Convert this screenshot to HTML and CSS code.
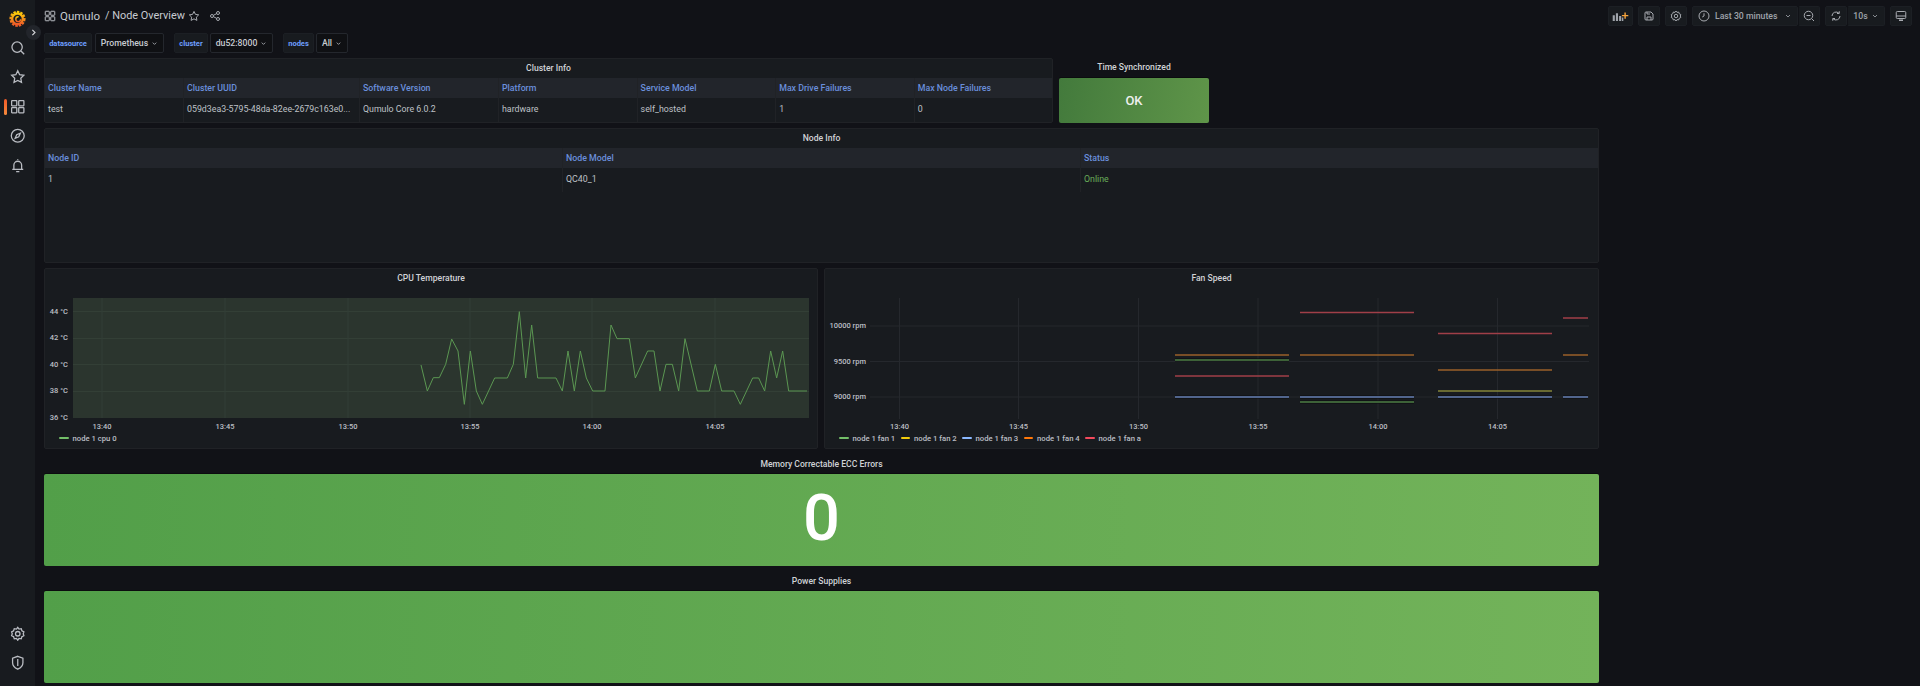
FILE: index.html
```html
<!DOCTYPE html>
<html lang="en">
<head>
<meta charset="utf-8">
<title>Qumulo / Node Overview</title>
<link rel="stylesheet" href="styles.css">
</head>
<body>
<svg class="defs" width="0" height="0">
  <defs>
    <linearGradient id="logoGrad" x1="0" y1="1" x2="0" y2="0"><stop offset="0" stop-color="#f05a28"/><stop offset="1" stop-color="#fbca0a"/></linearGradient>
    <symbol id="i-search" viewBox="0 0 24 24"><circle cx="11" cy="11" r="8"/><path d="M17 17l5 5"/></symbol>
    <symbol id="i-star" viewBox="0 0 24 24"><path d="M12 2.8l2.9 6 6.500.9-4.700 4.600 1.100 6.500-5.800-3.100-5.800 3.100 1.100-6.500-4.700-4.600 6.500-.9z"/></symbol>
    <symbol id="i-grid" viewBox="0 0 24 24"><rect x="2.500" y="2.500" width="8" height="8" rx=".8"/><rect x="13.500" y="2.500" width="8" height="8" rx=".8"/><rect x="2.500" y="13.500" width="8" height="8" rx=".8"/><rect x="13.500" y="13.500" width="8" height="8" rx=".8"/></symbol>
    <symbol id="i-compass" viewBox="0 0 24 24"><circle cx="12" cy="12" r="10"/><path d="M16 8l-2.400 5.600L8 16l2.400-5.600z"/></symbol>
    <symbol id="i-bell" viewBox="0 0 24 24"><path d="M6 17v-6a6 6 0 0 1 12 0v6M3.500 17.500h17M9.500 21h5M12 3V2"/></symbol>
    <symbol id="i-cog" viewBox="0 0 24 24"><circle cx="12" cy="12" r="3.500"/><path d="M12 2l2 2.800 3.400-.7 1 3.300 3.100 1.600-1 3 1 3-3.100 1.600-1 3.300-3.400-.7L12 22l-2-2.800-3.400.7-1-3.300-3.100-1.600 1-3-1-3 3.100-1.600 1-3.300 3.400.7z"/></symbol>
    <symbol id="i-shield" viewBox="0 0 24 24"><path d="M12 2l8 3v7c0 5-3.500 8-8 10-4.500-2-8-5-8-10V5z"/><path d="M12 6v11"/></symbol>
    <symbol id="i-share" viewBox="0 0 24 24"><circle cx="6" cy="12" r="3"/><circle cx="18" cy="6" r="3"/><circle cx="18" cy="18" r="3"/><path d="M8.700 10.700l6.600-3.400M8.700 13.300l6.600 3.400"/></symbol>
    <symbol id="i-save" viewBox="0 0 24 24"><path d="M4 6a2 2 0 0 1 2-2h10l4 4v10a2 2 0 0 1-2 2H6a2 2 0 0 1-2-2z"/><path d="M8 4v4h6M8 20v-6h8v6"/></symbol>
    <symbol id="i-clock" viewBox="0 0 24 24"><circle cx="12" cy="12" r="10"/><path d="M12 6.500V12l-3.500 2"/></symbol>
    <symbol id="i-zoom" viewBox="0 0 24 24"><circle cx="11" cy="11" r="8.500"/><path d="M17.500 17.500l4.500 4.500M7 11h8"/></symbol>
    <symbol id="i-sync" viewBox="0 0 24 24"><path d="M20 12a8 8 0 0 1-14 5.300M4 12a8 8 0 0 1 14-5.300"/><path d="M18.500 2.500v4.500H14M5.500 21.500V17H10"/></symbol>
    <symbol id="i-tv" viewBox="0 0 24 24"><rect x="2.500" y="3" width="19" height="14" rx="2"/><path d="M2.500 12h19M8 21h8M10 17v4M14 17v4"/></symbol>
    <symbol id="i-chev" viewBox="0 0 24 24"><path d="M6 9l6 6 6-6"/></symbol>
  </defs>
</svg>

<div class="app">
  <aside class="sidebar">
    <div class="side-top">
      <svg class="logo" viewBox="0 0 24 24">
        <circle cx="12" cy="12.500" r="9.800" fill="none" stroke="url(#logoGrad)" stroke-width="3.200" stroke-dasharray="3.400 1.600"/>
        <circle cx="12" cy="12.500" r="7.600" fill="none" stroke="url(#logoGrad)" stroke-width="3.400"/>
        <circle cx="13" cy="13" r="3.400" fill="none" stroke="url(#logoGrad)" stroke-width="2" stroke-dasharray="15 7"/>
      </svg>
      <svg class="side-ic"><use href="#i-search"/></svg>
      <svg class="side-ic"><use href="#i-star"/></svg>
      <div class="side-active"><svg class="side-ic"><use href="#i-grid"/></svg></div>
      <svg class="side-ic"><use href="#i-compass"/></svg>
      <svg class="side-ic"><use href="#i-bell"/></svg>
    </div>
    <div class="side-bottom">
      <svg class="side-ic"><use href="#i-cog"/></svg>
      <svg class="side-ic"><use href="#i-shield"/></svg>
    </div>
  </aside>
  <button class="toggle" aria-label="Expand"><svg viewBox="0 0 24 24"><path d="M9 5l7 7-7 7"/></svg></button>

  <main class="main">
    <header class="nav">
      <svg class="nav-grid"><use href="#i-grid"/></svg>
      <span class="crumb">Qumulo</span>
      <span class="crumb crumb-page">/ Node Overview</span>
      <svg class="nav-ic nav-star"><use href="#i-star"/></svg>
      <svg class="nav-ic nav-share"><use href="#i-share"/></svg>
      <div class="toolbar">
        <div class="tbtn tbtn-add">
          <svg class="bars" viewBox="0 0 24 14"><path class="bars-g" d="M1 6h3v8H1zM5.500 3h3v11h-3zM10 7h3v7h-3zM14 9h2v5h-2z"/><path class="bars-p" d="M17.500 2h2v3.500H23v2h-3.500V11h-2V7.500H14v-2h3.500z"/></svg>
        </div>
        <div class="tbtn tbtn-sq"><svg class="nav-ic"><use href="#i-save"/></svg></div>
        <div class="tbtn tbtn-sq"><svg class="nav-ic"><use href="#i-cog"/></svg></div>
        <div class="tgroup">
          <div class="tbtn tbtn-time"><svg class="nav-ic"><use href="#i-clock"/></svg><span>Last 30 minutes</span><svg class="chev"><use href="#i-chev"/></svg></div>
          <div class="tbtn tbtn-sq tbtn-join"><svg class="nav-ic"><use href="#i-zoom"/></svg></div>
        </div>
        <div class="tgroup">
          <div class="tbtn tbtn-sq"><svg class="nav-ic"><use href="#i-sync"/></svg></div>
          <div class="tbtn tbtn-rate tbtn-join"><span>10s</span><svg class="chev"><use href="#i-chev"/></svg></div>
        </div>
        <div class="tbtn tbtn-sq"><svg class="nav-ic"><use href="#i-tv"/></svg></div>
      </div>
    </header>

    <div class="vars">
      <span class="var-label var-ds">datasource</span><span class="var-value var-v1">Prometheus<svg class="chev"><use href="#i-chev"/></svg></span>
      <span class="var-label var-cl">cluster</span><span class="var-value var-v2">du52:8000<svg class="chev"><use href="#i-chev"/></svg></span>
      <span class="var-label var-no">nodes</span><span class="var-value var-v3">All<svg class="chev"><use href="#i-chev"/></svg></span>
    </div>

    <div class="dash">
      <div class="row row-1">
        <section class="panel panel-cluster">
          <h2 class="ptitle">Cluster Info</h2>
          <div class="tbl tbl-cluster">
            <div class="th">Cluster Name</div><div class="th">Cluster UUID</div><div class="th">Software Version</div><div class="th">Platform</div><div class="th">Service Model</div><div class="th">Max Drive Failures</div><div class="th">Max Node Failures</div>
            <div class="td">test</div><div class="td">059d3ea3-5795-48da-82ee-2679c163e0...</div><div class="td">Qumulo Core 6.0.2</div><div class="td">hardware</div><div class="td">self_hosted</div><div class="td">1</div><div class="td">0</div>
          </div>
        </section>
        <section class="stat-time">
          <h2 class="ptitle">Time Synchronized</h2>
          <div class="ok">OK</div>
        </section>
      </div>

      <section class="panel panel-node">
        <h2 class="ptitle">Node Info</h2>
        <div class="tbl tbl-node">
          <div class="th">Node ID</div><div class="th">Node Model</div><div class="th">Status</div>
          <div class="td">1</div><div class="td">QC40_1</div><div class="td td-ok">Online</div>
        </div>
      </section>

      <div class="row row-3">
        <section class="panel panel-graph panel-cpu">
          <h2 class="ptitle">CPU Temperature</h2>
          <svg class="chart" viewBox="45 288 772 142">
            <rect class="plot-bg" x="73" y="298" width="736" height="120"/>
            <path class="grid-g" d="M73 311.500H809M73 338.500H809M73 364.500H809M73 391.500H809M102 298V418M225 298V418M348 298V418M470 298V418M592 298V418M715 298V418"/>
            <g transform="translate(430 280) scale(.33333)">
              <path class="cpu-line" d="M-27 255L-8 333 10 293 28 293 47 253 65 177 84 213 103 373 121 213 139 333 157 373 194 294 232 294 250 253 268 95 287 294 305 135 323 294 378 294 397 333 414 213 433 333 451 213 469 294 488 333 525 333 543 135 561 176 598 176 616 294 653 213 672 213 690 333 708 253 727 253 746 333 765 176 802 333 838 333 856 253 875 333 912 333 931 373 968 294 986 294 1004 333 1022 213 1040 294 1058 213 1076 333 1131 333"/>
            </g>
            <g class="ax ax-y">
              <text x="68" y="313.500">44 °C</text><text x="68" y="340">42 °C</text><text x="68" y="366.500">40 °C</text><text x="68" y="393">38 °C</text><text x="68" y="419.500">36 °C</text>
            </g>
            <g class="ax ax-x">
              <text x="102" y="429">13:40</text><text x="225" y="429">13:45</text><text x="348" y="429">13:50</text><text x="470" y="429">13:55</text><text x="592" y="429">14:00</text><text x="715" y="429">14:05</text>
            </g>
          </svg>
          <div class="legend">
            <span class="lg"><i class="sw sw-green"></i>node 1 cpu 0</span>
          </div>
        </section>
        <section class="panel panel-graph panel-fan">
          <h2 class="ptitle">Fan Speed</h2>
          <svg class="chart" viewBox="825 288 773 142">
            <path class="grid-d" d="M870 326H1589M870 361.500H1589M870 397H1589M899.500 298V419M1018.500 298V419M1138.500 298V419M1258 298V419M1378 298V419M1497.500 298V419"/>
            <path class="halo" d="M1175 397H1289M1300 397H1414M1438 397H1552M1563 397H1588M1300 402H1414M1175 360H1289"/>
            <path class="s-green" d="M1175 360H1289M1300 402H1414"/>
            <path class="s-yellow" d="M1438 391H1552"/>
            <path class="s-blue" d="M1175 397H1289M1300 397H1414M1438 397H1552M1563 397H1588"/>
            <path class="s-orange" d="M1175 355H1289M1300 355H1414M1438 370H1552M1563 355H1588"/>
            <path class="s-red" d="M1175 376H1289M1300 312.500H1414M1438 333.500H1552M1563 318H1588"/>
            <g class="ax ax-y">
              <text x="866" y="328">10000 rpm</text><text x="866" y="363.500">9500 rpm</text><text x="866" y="399">9000 rpm</text>
            </g>
            <g class="ax ax-x">
              <text x="899.500" y="429">13:40</text><text x="1018.500" y="429">13:45</text><text x="1138.500" y="429">13:50</text><text x="1258" y="429">13:55</text><text x="1378" y="429">14:00</text><text x="1497.500" y="429">14:05</text>
            </g>
          </svg>
          <div class="legend">
            <span class="lg"><i class="sw sw-green"></i>node 1 fan 1</span>
            <span class="lg"><i class="sw sw-yellow"></i>node 1 fan 2</span>
            <span class="lg"><i class="sw sw-blue"></i>node 1 fan 3</span>
            <span class="lg"><i class="sw sw-orange"></i>node 1 fan 4</span>
            <span class="lg"><i class="sw sw-red"></i>node 1 fan a</span>
          </div>
        </section>
      </div>

      <section class="stat">
        <h2 class="ptitle">Memory Correctable ECC Errors</h2>
        <div class="stat-body">0</div>
      </section>
      <section class="stat">
        <h2 class="ptitle">Power Supplies</h2>
        <div class="stat-body"></div>
      </section>
    </div>
  </main>
</div>
</body>
</html>
```

FILE: styles.css
```css
* { box-sizing: border-box; }
html, body { margin: 0; height: 686px; }
body {
  background: #111217;
  color: #c7cbd1;
  font-family: Roboto, "Liberation Sans", sans-serif;
  overflow: hidden;
}
.defs { display: block; position: absolute; }
svg { display: block; }
.app { display: flex; height: 686px; overflow: hidden; }

/* sidebar */
.sidebar {
  width: 35px;
  flex: none;
  height: 686px;
  background: #181b1f;
  display: flex;
  flex-direction: column;
  justify-content: space-between;
  align-items: center;
  padding: 10px 0 16px;
}
.side-top { display: flex; flex-direction: column; align-items: center; width: 100%; }
.side-bottom { display: flex; flex-direction: column; align-items: center; gap: 13.500px; }
.logo { width: 17px; height: 17px; margin-bottom: 12.700px; }
.side-ic { width: 15.500px; height: 15.500px; fill: none; stroke: #b9bcc2; stroke-width: 2; margin-bottom: 14px; flex: none; }
.side-bottom .side-ic { margin-bottom: 0; }
.side-active { position: relative; width: 100%; display: flex; justify-content: center; }
.side-active::before {
  content: "";
  position: absolute;
  left: 4px;
  top: 0;
  width: 3px;
  height: 16px;
  border-radius: 2px;
  background: linear-gradient(#f05a28, #f58a3c);
}
.toggle {
  position: absolute;
  left: 26px;
  top: 25px;
  width: 15px;
  height: 15px;
  padding: 3px;
  border: 0;
  border-radius: 50%;
  background: #22252b;
  z-index: 2;
}
.toggle svg { width: 9px; height: 9px; fill: none; stroke: #d8d9dc; stroke-width: 3; }

/* main */
.main { flex: 1; min-width: 0; padding-left: 9px; }
.nav { height: 33px; display: flex; align-items: center; padding-right: 8px; padding-bottom: 1px; }
.nav-grid { width: 12px; height: 12px; fill: none; stroke: #b9bcc2; stroke-width: 2; margin-right: 4px; margin-bottom: 1px; }
.crumb { font-size: 11.500px; color: #c7cbd1; white-space: nowrap; margin-bottom: 1px; }
.crumb-page { margin-left: 5px; font-size: 10.900px; }
.nav-ic { width: 12px; height: 12px; fill: none; stroke: #a8abb1; stroke-width: 2; flex: none; }
.nav-star { margin-left: 3px; }
.nav-share { margin-left: 9px; }
.toolbar { margin-left: auto; display: flex; gap: 5px; align-items: center; }
.tgroup { display: flex; }
.tbtn {
  height: 20px;
  background: #181b1f;
  border: 1px solid #1c1f24;
  border-radius: 2px;
  display: flex;
  align-items: center;
  justify-content: center;
  font-size: 8.700px;
  font-weight: 500;
  color: #9fa3aa;
  white-space: nowrap;
  flex: none;
}
.tbtn-add { width: 25px; }
.tbtn-sq { width: 22px; }
.tbtn-join { border-left-color: #111217; }
.tbtn-time { width: 106px; justify-content: flex-start; padding-left: 5px; }
.tbtn-time span { margin-left: 5px; }
.tbtn-time .chev { margin-left: 7px; }
.tbtn-rate { width: 38px; }
.tbtn-rate .chev { margin-left: 3px; }
.bars { width: 17px; height: 10px; }
.bars-g { fill: #9fa3aa; }
.bars-p { fill: #f5a33c; }
.chev { width: 8px; height: 8px; fill: none; stroke: currentColor; stroke-width: 2.500; flex: none; }

/* variables */
.vars { height: 20px; display: flex; align-items: stretch; margin-bottom: 5px; }
.var-label, .var-value {
  display: flex;
  align-items: center;
  justify-content: center;
  border-radius: 2px;
  border: 1px solid #1c1f24;
  white-space: nowrap;
}
.var-label { background: #181b1f; color: #6e9fff; font-size: 7.500px; font-weight: 700; }
.var-value { background: #0f1013; border-color: #24272d; color: #c7cbd1; font-size: 8.700px; font-weight: 500; margin-left: 3px; }
.var-value .chev { width: 7px; height: 7px; margin-left: 3px; }
.var-ds { width: 48px; }
.var-v1 { width: 69px; }
.var-cl { width: 34px; margin-left: 10px; }
.var-v2 { width: 63px; margin-left: 2px; }
.var-no { width: 31px; margin-left: 10px; }
.var-v3 { width: 32px; margin-left: 2px; }

/* dashboard */
.dash { width: 1555px; display: flex; flex-direction: column; gap: 5px; }
.row { display: flex; }
.row-1 { gap: 6px; }
.row-3 { gap: 6px; }
.panel { background: #181b1f; border: 1px solid #202226; border-radius: 2px; }
.ptitle {
  margin: 0;
  height: 19px;
  line-height: 18px;
  text-align: center;
  font-size: 8.600px;
  font-weight: 500;
  color: #d0d2d6;
  white-space: nowrap;
}
.panel-cluster { width: 1009px; height: 65px; }
.panel-node { height: 135px; }
.stat-time { width: 150px; }
.stat-time .ptitle { height: 20px; line-height: 19px; }
.ok {
  height: 45px;
  border-radius: 2px;
  display: flex;
  align-items: center;
  justify-content: center;
  font-size: 13px;
  font-weight: 500;
  color: #eef0ee;
  background: linear-gradient(100deg, #437a3c, #5f9549);
  box-shadow: 0 -1px #0b0c0e;
}
.tbl { display: grid; }
.tbl-cluster { grid-template-columns: 138px 176px 139px 138.600px 138.600px 138.600px 1fr; }
.tbl-node { grid-template-columns: 517px 518px 1fr; }
.th, .td {
  padding-left: 3px;
  display: flex;
  align-items: center;
  font-size: 8.800px;
  white-space: nowrap;
  overflow: hidden;
  border-left: 1px solid #202226;
}
.th:first-child { border-left: 0; }
.th { height: 20px; background: #22252b; color: #6a8fdc; font-weight: 500; padding-bottom: 1px; }
.td { height: 24px; color: #bfc2c7; padding-bottom: 3px; }
.td:nth-child(8), .tbl-node .td:nth-child(4) { border-left: 0; }
.td-ok { color: #69ad5a; }

/* graphs */
.panel-graph { height: 181px; }
.panel-cpu { width: 774px; }
.panel-fan { width: 775px; }
.chart { width: 100%; height: 142px; }
.plot-bg { fill: #2b352e; }
.grid-g { fill: none; stroke: #333f36; stroke-width: 1; }
.grid-d { fill: none; stroke: #25282d; stroke-width: 1; }
.cpu-line { fill: none; stroke: #5b9752; stroke-width: 1; vector-effect: non-scaling-stroke; stroke-linejoin: round; }
.ax text { font-family: Roboto, sans-serif; font-size: 7.500px; font-weight: 500; fill: #bcbfc5; }
.ax-y { text-anchor: end; }
.ax-x { text-anchor: middle; }
.halo { fill: none; stroke: #0b0c0f; stroke-width: 3; }
.s-green, .s-yellow, .s-blue, .s-orange, .s-red { fill: none; stroke-width: 1.500; }
.s-green { stroke: #4f7f47; }
.s-yellow { stroke: #85863a; }
.s-blue { stroke: #6a83b8; }
.s-orange { stroke: #99602a; }
.s-red { stroke: #a03f48; }
.legend { display: flex; height: 16px; align-items: center; gap: 6px; padding-left: 14px; }
.lg { display: flex; align-items: center; gap: 4px; font-size: 7.700px; font-weight: 500; color: #bcbfc5; white-space: nowrap; width: 55.500px; }
.panel-cpu .lg { width: auto; }
.sw { width: 9.500px; height: 2.500px; border-radius: 1px; flex: none; }
.sw-green { background: #73bf69; }
.sw-yellow { background: #f2cc0c; }
.sw-blue { background: #8ab8ff; }
.sw-orange { background: #ff780a; }
.sw-red { background: #f2495c; }

/* stat */
.stat .ptitle { height: 20px; line-height: 20px; }
.stat-body {
  height: 92px;
  border-radius: 2px;
  display: flex;
  align-items: center;
  justify-content: center;
  font-size: 65px;
  font-weight: 500;
  color: #fff;
  padding-bottom: 4px;
  background: linear-gradient(92deg, #529f49, #73b35a);
  box-shadow: 0 -1px #0b0c0e;
}
```
